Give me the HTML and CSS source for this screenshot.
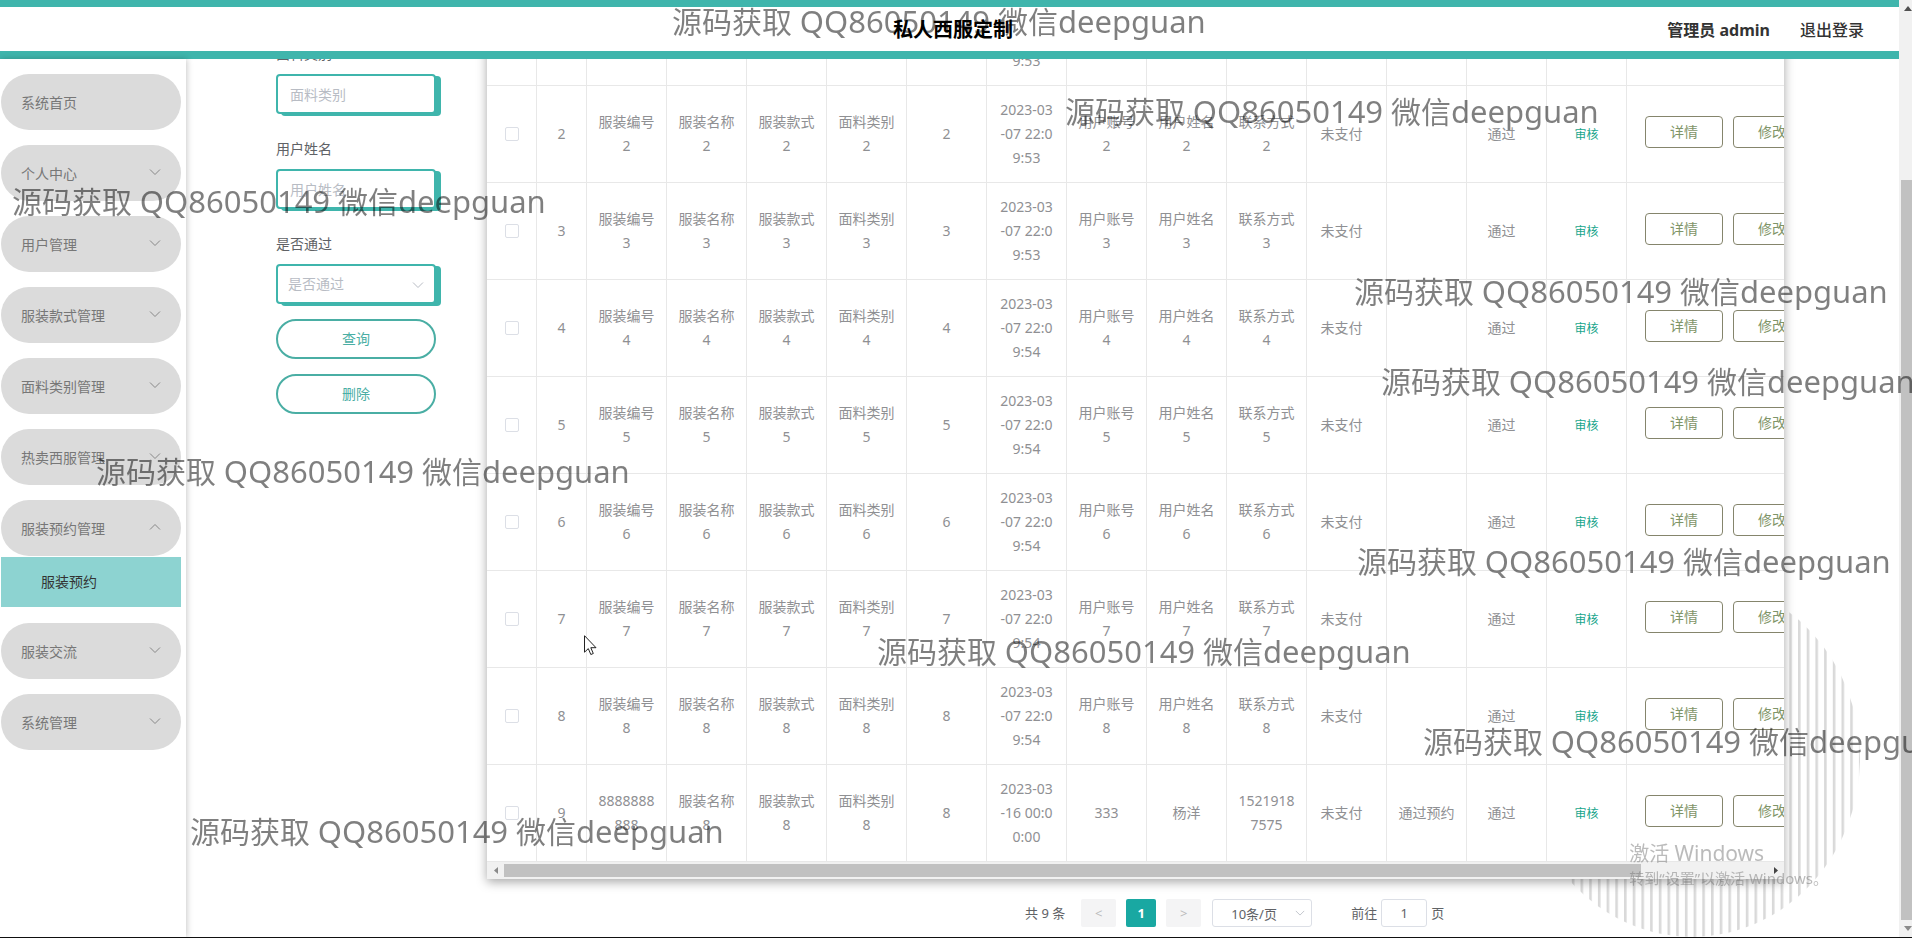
FILE: index.html
```html
<!DOCTYPE html>
<html lang="zh-CN">
<head>
<meta charset="utf-8">
<title>私人西服定制</title>
<link rel="stylesheet" href="styles.css">
</head>
<body>
<svg class="defs" aria-hidden="true">
  <symbol id="down" viewBox="0 0 12 12"><path d="M1 3.500 6 8.500 11 3.500" fill="none" stroke="currentColor"/></symbol>
  <symbol id="up" viewBox="0 0 12 12"><path d="M1 8.500 6 3.500 11 8.500" fill="none" stroke="currentColor"/></symbol>
</svg>
<div class="app">
  <div class="page">
    <header class="topbar">
      <h1 class="title">私人西服定制</h1>
      <div class="account"><strong>管理员 admin</strong><a class="logout" href="#">退出登录</a></div>
    </header>
    <div class="body">
      <nav class="sidebar">
        <a class="pill" href="#">系统首页</a>
        <a class="pill" href="#">个人中心<svg class="chev"><use href="#down"/></svg></a>
        <a class="pill" href="#">用户管理<svg class="chev"><use href="#down"/></svg></a>
        <a class="pill" href="#">服装款式管理<svg class="chev"><use href="#down"/></svg></a>
        <a class="pill" href="#">面料类别管理<svg class="chev"><use href="#down"/></svg></a>
        <a class="pill" href="#">热卖西服管理<svg class="chev"><use href="#down"/></svg></a>
        <div class="group">
          <a class="pill" href="#">服装预约管理<svg class="chev"><use href="#up"/></svg></a>
          <a class="sub" href="#">服装预约</a>
        </div>
        <a class="pill" href="#">服装交流<svg class="chev"><use href="#down"/></svg></a>
        <a class="pill" href="#">系统管理<svg class="chev"><use href="#down"/></svg></a>
      </nav>
      <main class="main">
        <svg class="disc" viewBox="0 0 336 358" aria-hidden="true">
          <defs><pattern id="stripes" width="8.7" height="358" patternUnits="userSpaceOnUse" x="4.300"><rect width="2.600" height="358" fill="#d9d9d9"/></pattern></defs>
          <ellipse cx="168" cy="179" rx="168" ry="179" fill="url(#stripes)"/>
        </svg>
        <div class="content">
          <form class="filters">
            <label for="f1">面料类别</label>
            <input class="field" id="f1" placeholder="面料类别">
            <label for="f2">用户姓名</label>
            <input class="field" id="f2" placeholder="用户姓名">
            <label for="f3">是否通过</label>
            <div class="selectbox"><select class="field" id="f3"><option>是否通过</option></select><svg class="caret"><use href="#down"/></svg></div>
            <button class="round" type="button">查询</button>
            <button class="round" type="button">删除</button>
          </form>
          <section class="results">
            <div class="card">
              <div class="clip">
              <table class="grid">
                <colgroup><col class="narrow" span="2"><col class="mid" span="13"><col></colgroup>
                <tbody id="rows"></tbody>
              </table>
              </div>
              <div class="hbar"><svg viewBox="0 0 17 17"><path d="M11 5v7L7 8.500z" fill="#8a8a8a"/></svg><div class="htrack"><div class="hthumb"></div></div><svg viewBox="0 0 17 17"><path d="M7 5v7l4-3.500z" fill="#444"/></svg></div>
            </div>
            <div class="pager">
              <span class="total">共 9 条</span>
              <button class="pg" type="button" disabled>&lt;</button>
              <button class="pg current" type="button">1</button>
              <button class="pg" type="button" disabled>&gt;</button>
              <div class="selectbox size"><select aria-label="每页条数"><option>10条/页</option></select><svg class="caret"><use href="#down"/></svg></div>
              <label class="jump">前往<input value="1">页</label>
            </div>
          </section>
        </div>
      </main>
    </div>
  </div>
  <div class="vbar"><svg viewBox="0 0 17 17"><path d="M5 11h8L9 6z" fill="#505050"/></svg><div class="vtrack"><div class="vthumb"></div></div><svg viewBox="0 0 17 17"><path d="M5 6h8l-4 5z" fill="#8a8a8a"/></svg></div>
</div>
<div class="edge"></div>

<div class="marks" id="marks" aria-hidden="true"></div>
<div class="activate"><p class="big">激活 <span>Windows</span></p><p>转到“设置”以激活 Windows。</p></div>
<svg class="cursor" viewBox="0 0 13 21" aria-hidden="true"><path d="M.5.700v16.500l3.800-3.600 2.500 5.900 2.500-1-2.500-5.800h5.200z" fill="#fff" stroke="#222"/></svg>
<script src="page.js"></script>
</body>
</html>
```

FILE: styles.css
```css
* { box-sizing: border-box; }
body {
  margin: 0;
  height: 100vh;
  overflow: hidden;
  display: flex;
  flex-direction: column;
  background: #fff;
  color: #606266;
  font: 14px/24px "Noto Sans", "Noto Sans CJK SC", sans-serif;
}
button, input, select { font: inherit; color: inherit; margin: 0; }
a { color: inherit; text-decoration: none; }
p { margin: 0; }
.defs { position: absolute; width: 0; height: 0; }

.app { flex: 1; min-height: 0; display: flex; }
.page { flex: 1; min-width: 0; display: flex; flex-direction: column; }
.edge { height: 1px; background: #111; }

.topbar {
  display: grid;
  grid-template-columns: 1fr auto 1fr;
  align-items: center;
  height: 59px;
  flex: none;
  padding: 2px 35px 0 42px;
  border-top: 7px solid #3fb5ac;
  border-bottom: 8px solid #3fb5ac;
}
.title { grid-column: 2; margin: 0; font-size: 20px; color: #000; }
.account { display: flex; justify-content: flex-end; gap: 30px; font-size: 16px; color: #333; }
.logout { font-weight: 500; }

.body { flex: 1; min-height: 0; display: flex; }
.sidebar {
  position: relative;
  z-index: 1;
  width: 186px;
  flex: none;
  padding: 15px 5px 0 1px;
  display: flex;
  flex-direction: column;
  gap: 15px;
  background: #fff;
  box-shadow: 1px 0 6px rgba(0, 0, 0, .22);
}
.pill {
  display: flex;
  align-items: center;
  justify-content: space-between;
  height: 56px;
  padding: 2px 20px 0;
  border-radius: 28px;
  background: #dbdbdb;
  color: #777;
}
.chev { width: 12px; height: 12px; margin-bottom: 4px; color: #888; }
.group { display: flex; flex-direction: column; gap: 1px; padding-bottom: 1px; }
.sub {
  height: 50px;
  padding-left: 40px;
  line-height: 50px;
  background: #8dd3d1;
  color: #333;
}

.main { position: relative; flex: 1; min-width: 0; overflow: hidden; }
.disc { position: absolute; right: 39px; top: 520px; width: 336px; height: 358px; }
.content { position: relative; display: flex; margin-top: -70px; padding: 0 115px 0 90px; }
.filters {
  width: 160px;
  flex: none;
  margin: 45px 51px 0 0;
  display: flex;
  flex-direction: column;
}
.filters label { line-height: 40px; }
.field {
  width: 100%;
  height: 40px;
  margin-bottom: 15px;
  padding: 0 12px;
  border: 2px solid #3fb5ac;
  border-radius: 4px;
  background: #fff;
  box-shadow: 5px 2px 0 #3fb5ac;
  color: #b8bcc4;
  display: block;
}
select { appearance: none; }
select.field { padding: 0 10px; }
.field::placeholder { color: #b8bcc4; }
.selectbox { position: relative; }
.caret { position: absolute; right: 12px; top: 15px; width: 12px; height: 12px; color: #b8bcc4; }
.round {
  height: 40px;
  margin-bottom: 15px;
  border: 2px solid #4aaea4;
  border-radius: 20px;
  background: #fff;
  color: #4aaea4;
}

.results { flex: 1; min-width: 0; }
.card { background: #fff; box-shadow: 0 3px 10px rgba(0, 0, 0, .35); }
.clip { overflow: hidden; }
.grid { width: 1460px; table-layout: fixed; border-collapse: separate; border-spacing: 0; color: #8f9093; }
.narrow { width: 50px; }
.mid { width: 80px; }
.grid td {
  height: 97px;
  padding: 0;
  text-align: center;
  border-right: 1px solid #e8e8e8;
  border-bottom: 1px solid #e8e8e8;
}
.grid td.status { padding-right: 10px; }
.grid input {
  appearance: none;
  display: block;
  width: 14px;
  height: 14px;
  margin: 0 auto;
  border: 1px solid #dcdfe6;
  border-radius: 2px;
}
.audit { border: 0; padding: 0; background: none; font-size: 12px; color: #19a58c; }
.ops { display: flex; gap: 10px; padding: 0 0 4px 18px; }
.op {
  width: 78px;
  height: 32px;
  flex: none;
  padding: 0;
  border: 1px solid #85856c;
  border-radius: 4px;
  background: #fff;
  color: #7f9568;
}

.hbar { display: flex; height: 17px; background: #f1f1f1; }
.hbar svg, .vbar svg { width: 17px; height: 17px; flex: none; }
.htrack { flex: 1; padding: 2px 0; }
.hthumb { width: 90%; height: 13px; background: #c1c1c1; }

.pager { display: flex; align-items: center; padding: 20px 0 0 538px; font-size: 13px; line-height: 28px; }
.total { margin-right: 16px; }
.pg {
  width: 35px;
  height: 28px;
  padding: 0;
  margin-right: 10px;
  border: 0;
  border-radius: 2px;
  background: #f4f4f5;
  color: #bbb;
}
.pg.current { width: 30px; background: #19a8a2; color: #fff; font-weight: 700; }
.size { margin-left: 1px; }
.size select {
  display: block;
  width: 100px;
  height: 28px;
  padding: 0 18px;
  border: 1px solid #dcdfe6;
  border-radius: 3px;
  background: #fff;
}
.size .caret { right: 7px; top: 9px; width: 10px; height: 10px; }
.jump { display: flex; gap: 4px; margin-left: 39px; }
.jump input {
  width: 46px;
  height: 28px;
  padding: 0;
  text-align: center;
  border: 1px solid #dcdfe6;
  border-radius: 3px;
}

.vbar { display: flex; flex-direction: column; width: 13px; overflow: hidden; background: #f1f1f1; }
.vtrack { flex: 1; padding-left: 2px; display: flex; align-items: flex-end; }
.vthumb { width: 15px; height: 82%; flex: none; background: #c1c1c1; }

.marks { position: fixed; inset: 0; overflow: hidden; pointer-events: none; z-index: 5; }
.mark {
  position: absolute;
  font-size: 30px;
  line-height: 40px;
  white-space: nowrap;
  color: rgba(0, 0, 0, .5);
}
.mark span { font-size: 31px; }
.activate {
  position: absolute;
  right: 84px;
  bottom: 48px;
  z-index: 6;
  font-size: 15px;
  line-height: 24px;
  color: rgba(120, 120, 120, .5);
}
.activate .big { font-size: 20px; }
.big span { font-size: 21px; }
.cursor { position: absolute; left: 584px; top: 635px; width: 13px; height: 21px; z-index: 6; }
```

FILE: page.js
```js
const times = ["53", "53", "53", "54", "54", "54", "54", "54"];
const rows = times.map((s, i) => {
  const n = i + 1;
  const numbered = (t) => t + "<br>" + n;
  return [n, numbered("服装编号"), numbered("服装名称"), numbered("服装款式"), numbered("面料类别"), n,
    "2023-03<br>-07 22:0<br>9:" + s, numbered("用户账号"), numbered("用户姓名"), numbered("联系方式"), "未支付", "", "通过"];
});
rows.push([9, "8888888<br>888", "服装名称<br>8", "服装款式<br>8", "面料类别<br>8", 8,
  "2023-03<br>-16 00:0<br>0:00", "333", "杨洋", "1521918<br>7575", "未支付", "通过预约", "通过"]);
const statusColumns = [10, 12];
document.getElementById("rows").innerHTML = rows.map((r) =>
  '<tr><td><input type="checkbox" aria-label="选择第' + r[0] + '行"></td>' +
  r.map((c, i) => (statusColumns.includes(i) ? '<td class="status">' : "<td>") + c + "</td>").join("") +
  '<td><button class="audit" type="button">审核</button></td>' +
  '<td><div class="ops"><button class="op" type="button">详情</button><button class="op" type="button">修改</button></div></td></tr>'
).join("");

const marks = [[672, 1], [1065, 91], [12, 181], [1354, 271], [1381, 361], [96, 451], [1357, 541], [877, 631], [1423, 721], [190, 811]];
document.getElementById("marks").innerHTML = marks.map(([x, y]) =>
  '<div class="mark" style="left:' + x + "px;top:" + y + 'px">源码获取 <span>QQ86050149</span> 微信<span>deepguan</span></div>'
).join("");
```
